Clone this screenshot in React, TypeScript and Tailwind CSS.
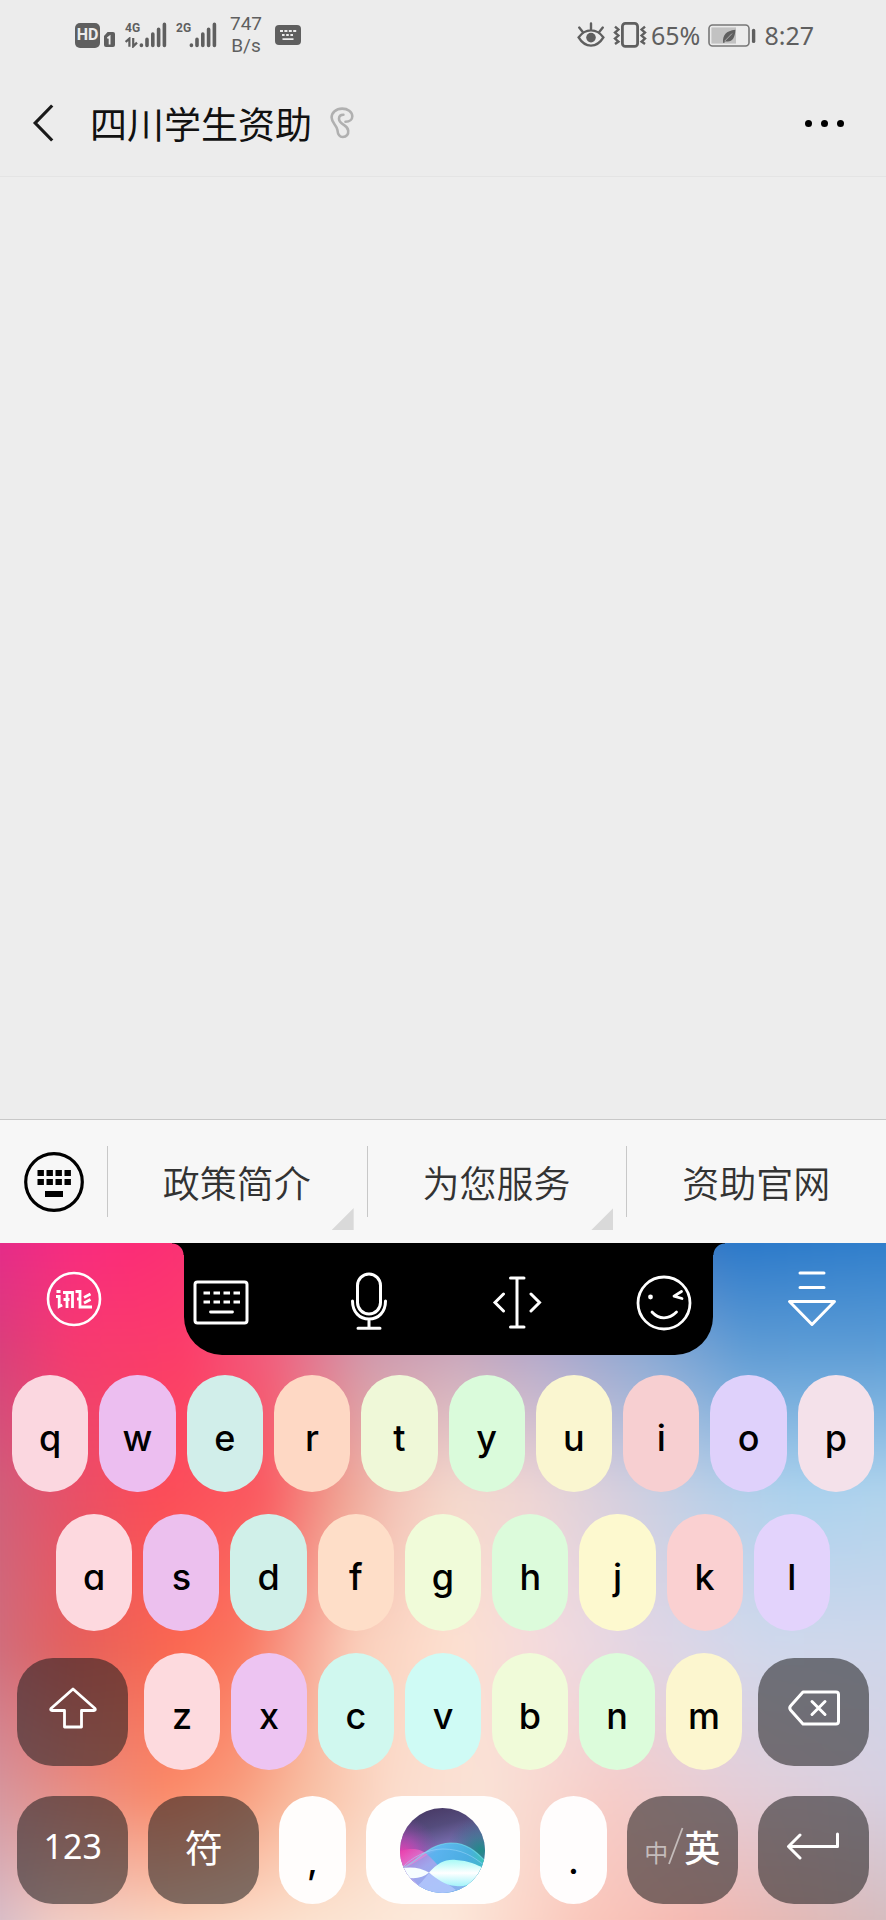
import React from "react";

const CJK = "font-['Noto_Sans_CJK_SC',sans-serif]";

/* ---------- status bar ---------- */

function SignalBars() {
  return (
    <svg width="28" height="26" viewBox="0 0 28 26" stroke="#5f5f5f" strokeWidth="3.6" strokeLinecap="round" aria-hidden="true">
      <path d="M2.4 23.4V23M8 23.4v-6M13.8 23.4v-11.4M19.6 23.4V7.2M25.4 23.4V2.4" />
    </svg>
  );
}

function StatusBar() {
  return (
    <div className="flex h-[72px] items-center justify-between pb-[2px] pl-[75px] pr-[72px] text-[#5f5f5f]">
      <div className="flex items-center">
        <span className="flex size-[25px] items-center justify-center rounded-[5px] bg-[#5f5f5f] font-['Roboto',sans-serif] text-[16px] font-bold leading-none text-[#ececec]">
          HD
        </span>
        <svg className="ml-1 mt-2" width="11" height="15" viewBox="0 0 11 15" aria-hidden="true">
          <path d="M3.6 0H9a2 2 0 0 1 2 2v11a2 2 0 0 1-2 2H2a2 2 0 0 1-2-2V4z" fill="#5f5f5f" />
          <path d="M3.4 6.2L5.6 4.6V12.4" fill="none" stroke="#ececec" strokeWidth="1.8" />
        </svg>
        <div className="ml-[10px] flex h-[26px] items-end">
          <div className="flex h-[26px] w-[14px] flex-col justify-between">
            <span className="font-['Roboto',sans-serif] text-[12px] font-bold leading-[12px]">4G</span>
            <svg width="13" height="11" viewBox="0 0 13 11" fill="none" stroke="#5f5f5f" strokeWidth="2.2" aria-hidden="true">
              <path d="M0.6 5L4.4 1.6V9.8M8.2 1V9.4L12 5.6" />
            </svg>
          </div>
          <SignalBars />
        </div>
        <div className="ml-[9px] flex h-[26px] items-start">
          <span className="w-[13px] font-['Roboto',sans-serif] text-[12px] font-bold leading-[12px]">2G</span>
          <SignalBars />
        </div>
        <div className="ml-[13px] text-center font-['Roboto',sans-serif] text-[19px] leading-[22px]">
          <div>747</div>
          <div>B/s</div>
        </div>
        <svg className="ml-[13px]" width="26" height="20" viewBox="0 0 26 20" aria-hidden="true">
          <rect width="26" height="20" rx="4" fill="#5f5f5f" />
          <path d="M5 6h3M9.4 6h3M13.8 6h3M18.2 6h3M7 10h2.6M11.2 10h2.6M15.4 10h2.6M7.5 14.2h11" stroke="#ececec" strokeWidth="1.8" />
        </svg>
      </div>
      <div className="flex items-center font-['Noto_Sans',sans-serif] text-[25px] leading-none">
        <svg width="28" height="26" viewBox="0 0 28 26" fill="none" stroke="#5f5f5f" strokeWidth="2.4" strokeLinecap="round" aria-hidden="true">
          <path d="M1.6 15.4C5 10.6 9 8.4 14 8.4s9 2.2 12.4 7C23 21 19 23.6 14 23.6S5 21 1.6 15.4zM14 7V1.4M5.4 9.6L2.2 5.6M22.6 9.6l3.2-4" />
          <circle cx="14" cy="15.6" r="4.8" fill="#5f5f5f" stroke="none" />
        </svg>
        <svg className="ml-2" width="34" height="26" viewBox="0 0 34 26" fill="none" stroke="#5f5f5f" aria-hidden="true">
          <rect x="9.4" y="1.4" width="15.2" height="23" rx="3" strokeWidth="2.8" />
          <path d="M2 4.6l3.4 3L2 10.6l3.4 3L2 16.6l3.4 3L2 22M32 4.6l-3.4 3 3.4 3-3.4 3 3.4 3-3.4 3L32 22" strokeWidth="2.4" />
        </svg>
        <span className="ml-1">65%</span>
        <svg className="ml-2" width="48" height="23" viewBox="0 0 48 23" aria-hidden="true">
          <rect x="1" y="1" width="40" height="21" rx="3.5" fill="none" stroke="#777" strokeWidth="1.6" />
          <rect x="3.4" y="3.4" width="24.6" height="16.2" fill="#c2c2c2" />
          <path d="M15 18.4c-.2-7 2.8-11.6 12.4-12.6-.4 8.6-3.6 12.800-9.8 11.400l-1.600 1.800z" fill="#5f5f5f" />
          <path d="M16.4 17.4L24 9.6" stroke="#c2c2c2" strokeWidth=".8" />
          <path d="M45.6 6.4v11" stroke="#5f5f5f" strokeWidth="3.4" strokeLinecap="round" />
        </svg>
        <span className="ml-2">8:27</span>
      </div>
    </div>
  );
}

/* ---------- conversation header ---------- */

function Header() {
  return (
    <header className="flex h-[105px] items-center border-b border-[#e4e4e4] pb-[2px] pl-[32px] pr-[42px]">
      <button type="button" aria-label="返回" className="flex h-12 w-[58px] items-center">
        <svg width="22" height="38" viewBox="0 0 22 38" fill="none" stroke="#1a1a1a" strokeWidth="3.2">
          <path d="M20.2 1.5L3.2 19l17 17.5" />
        </svg>
      </button>
      <h1 className={`${CJK} text-[37px] font-normal leading-[48px] text-[#111]`}>四川学生资助</h1>
      <svg className="ml-[18px]" width="24" height="32" viewBox="0 0 24 32" fill="none" stroke="#b0b0b0" strokeWidth="2.6" strokeLinecap="round" strokeLinejoin="round" aria-hidden="true">
        <path d="M15.5 14.8C20 14.8 22.3 12 22.3 9.2 22 4.6 17.8 1.6 12.2 1.6 6 1.6 1.6 5.6 1.6 10.6c0 5.2 5.2 7.4 5.8 12.4.4 4.2 1.6 7 5.4 7s5.8-2.8 5.4-6.4c-.3-2.8-1.8-4.2-4.4-5.8-3.4-2-4.8-3.8-4.8-6 0-2.4 1.8-4 4.4-4" />
      </svg>
      <button type="button" aria-label="更多" className="ml-auto flex h-12 items-center gap-[9px]">
        <span className="size-[7px] rounded-full bg-black" />
        <span className="size-[7px] rounded-full bg-black" />
        <span className="size-[7px] rounded-full bg-black" />
      </button>
    </header>
  );
}

/* ---------- account menu ---------- */

function MenuItem({ label, more }: { label: string; more?: boolean }) {
  return (
    <button type="button" className="relative flex h-full flex-1 items-center justify-center">
      <span className="absolute left-0 top-[26px] h-[71px] w-px bg-[#c8c8c8]" />
      <span className={`${CJK} text-[37px] font-[350] leading-[48px] text-[#333]`}>{label}</span>
      {more && (
        <span className="absolute bottom-[13px] right-[13px] size-[22px] bg-[#d9d9d9] [clip-path:polygon(100%_0,100%_100%,0_100%)]" />
      )}
    </button>
  );
}

function MenuBar() {
  return (
    <nav className="flex h-[124px] items-center border-t border-[#c8c8c8] bg-[#f7f7f7]">
      <button type="button" aria-label="切换键盘" className="flex h-full w-[107px] items-center justify-center">
        <svg width="60" height="60" viewBox="0 0 60 60">
          <circle cx="30" cy="30" r="28.3" fill="none" stroke="#000" strokeWidth="3.200" />
          <path d="M13.5 21h6.400m2.600 0h6.400m2.600 0h6.400m2.600 0h6.400M13.5 30h6.400m2.600 0h6.400m2.600 0h6.400m2.600 0h6.400" stroke="#000" strokeWidth="6.200" />
          <path d="M21 42h18" stroke="#000" strokeWidth="6" />
        </svg>
      </button>
      <MenuItem label="政策简介" more />
      <MenuItem label="为您服务" more />
      <MenuItem label="资助官网" />
    </nav>
  );
}

/* ---------- keyboard ---------- */

/* Colour mesh behind the keys: each row is a horizontal gradient which fades in below the previous one. */
const MESH: { y: number; stops: string }[] = [
  { y: 2, stops: "#e0288f 0%, #f82a82 11%, #fd2a78 18%, #f2406f 34%, #90608f 56%, #2474c8 80%, #2c7ccb 100%" },
  { y: 18, stops: "#cf4080 0%, #f63a70 11%, #fc3c6a 23%, #f06080 32%, #cf98ac 42%, #c8a6bc 52%, #b0a8cc 61%, #88a8d4 72%, #5c9ad4 82%, #5a9cd6 100%" },
  { y: 38, stops: "#c86480 0%, #e85068 11%, #fc4c58 20%, #fa5a60 31%, #f0a090 39%, #f3c4b8 45%, #f5d9cc 51%, #efd6d4 59%, #d8d0de 68%, #b8d0e9 79%, #acd3ee 88%, #b2d4ed 100%" },
  { y: 59, stops: "#c87288 0%, #e5605c 11%, #fb6850 22%, #fa7860 29%, #f79c8a 34%, #fad0bc 41%, #fde0d0 51%, #f3dade 61%, #e2d6e4 71%, #d0d8ec 84%, #cfd6ea 100%" },
  { y: 79, stops: "#d09aa8 0%, #e88e84 11%, #fb8a68 21%, #f99c7c 28%, #f9c0a4 36%, #fbdccc 45%, #fae2d6 54%, #f6ccc8 68%, #e6cdd6 80%, #d4d0e2 100%" },
  { y: 97, stops: "#ccb8cc 0%, #f0cfc8 9%, #fad8c4 22%, #fbe4d2 36%, #fceadc 50%, #fac8bc 64%, #f6b8b0 76%, #e2b8b4 88%, #d0bcc0 100%" },
];

function Backdrop() {
  return (
    <div className="absolute inset-0 overflow-hidden" aria-hidden="true">
      <div className="absolute -inset-8 blur-[14px]">
        {MESH.map((row, i) => {
          const mask = i === 0 ? undefined : `linear-gradient(to bottom, transparent ${MESH[i - 1].y}%, #000 ${row.y}%)`;
          return (
            <div
              key={row.y}
              className="absolute inset-0"
              style={{ backgroundImage: `linear-gradient(to right, ${row.stops})`, maskImage: mask, WebkitMaskImage: mask }}
            />
          );
        })}
      </div>
    </div>
  );
}

function Tool({ label, children }: { label: string; children: React.ReactNode }) {
  return (
    <button type="button" aria-label={label} className="flex h-full items-center justify-center">
      {children}
    </button>
  );
}

function Toolbar() {
  return (
    <div className="relative h-[112px]">
      <div className="absolute bottom-0 left-[184px] right-[173px] top-0 rounded-b-[38px] bg-black">
        <span className="absolute right-full top-0 size-3 bg-[radial-gradient(circle_at_0_100%,transparent_11px,#000_12px)]" />
        <span className="absolute left-full top-0 size-3 bg-[radial-gradient(circle_at_100%_100%,transparent_11px,#000_12px)]" />
      </div>
      <div className="relative grid h-full grid-cols-6">
        <Tool label="讯飞输入法">
          <svg width="56" height="56" viewBox="0 0 56 56" fill="none" stroke="#fff" strokeWidth="2.6">
            <circle cx="28" cy="28" r="26" />
            <path d="M10.500 20.500h4M10 25.500h3.200V35.500l3-1.500M17 21.500h9.500V37M21 21.500V37M17.500 28.500h6M29.500 20.500h4.500v15.500h12M31 28h3M38 26.500l6.500-3.500M38 32l6.500-3.500" strokeWidth="2.8" />
          </svg>
        </Tool>
        <Tool label="键盘">
          <svg className="mt-2" width="56" height="46" viewBox="0 0 56 46" fill="none" stroke="#fff" strokeWidth="3">
            <rect x="2" y="2" width="52" height="41" rx="2.5" />
            <path d="M10.5 13h6.5M20.5 13H27M30.5 13H37M40.5 13H47M10.5 22h6.5M20.5 22H27M30.5 22H37M40.5 22H47" />
            <path d="M17.5 32h22" strokeWidth="2.8" strokeLinecap="round" />
          </svg>
        </Tool>
        <Tool label="语音">
          <svg className="mt-1" width="38" height="58" viewBox="0 0 38 58" fill="none" stroke="#fff" strokeWidth="3" strokeLinecap="round">
            <rect x="7.5" y="2" width="23" height="40" rx="11.5" />
            <path d="M2.5 29c0 11 7 18 16.500 18s16.500-7 16.500-18M19 47v9M8 56.2h22" />
          </svg>
        </Tool>
        <Tool label="光标">
          <svg className="mt-2" width="52" height="54" viewBox="0 0 52 54" fill="none" stroke="#fff" strokeWidth="3" strokeLinecap="round">
            <path d="M26 2v49M19.5 2h13.5M19.5 51h13.5M12.5 18L4 26.5 12.5 35M40 18l8.500 8.500L40 35" />
          </svg>
        </Tool>
        <Tool label="表情">
          <svg className="mt-2" width="56" height="56" viewBox="0 0 56 56" fill="none" stroke="#fff" strokeWidth="2.8" strokeLinecap="round" strokeLinejoin="round">
            <circle cx="28" cy="28" r="26" />
            <path d="M16 37c3.500 4 7.500 5.800 12 5.800S36.500 41 40.500 37M45.500 16.500l-7.500 4.600 8 2.400" />
            <circle cx="14.5" cy="22" r="2.4" fill="#fff" stroke="none" />
          </svg>
        </Tool>
        <Tool label="收起键盘">
          <svg width="50" height="56" viewBox="0 0 50 56" fill="none" stroke="#fff" strokeWidth="3" strokeLinecap="round" strokeLinejoin="round">
            <path d="M13 2h24M13 16.5h24M2.500 30.500h45L25 53.500z" />
          </svg>
        </Tool>
      </div>
    </div>
  );
}

const LETTER = "font-['Inter',sans-serif] text-[36px] font-medium leading-none text-black [font-feature-settings:'cv11']";

function Key({ char, tone }: { char: string; tone: string }) {
  return (
    <button type="button" className={`flex h-[117px] min-w-0 items-center justify-center rounded-[38px] pt-2 ${LETTER} ${tone}`}>
      {char}
    </button>
  );
}

function DarkKey({ label, className, children }: { label: string; className?: string; children: React.ReactNode }) {
  return (
    <button
      type="button"
      aria-label={label}
      className={`flex h-[108px] items-center justify-center rounded-[36px] bg-[#1c1c1c]/55 pb-2 text-white ${className ?? ""}`}
    >
      {children}
    </button>
  );
}

const ROW1: [string, string][] = [
  ["q", "bg-[#fbd7e0]"], ["w", "bg-[#ecbef0]"], ["e", "bg-[#d1eeea]"], ["r", "bg-[#fed8c4]"], ["t", "bg-[#eff8d8]"],
  ["y", "bg-[#dafbdb]"], ["u", "bg-[#faf6d0]"], ["i", "bg-[#f7cfd1]"], ["o", "bg-[#dfd1fb]"], ["p", "bg-[#f4e1ea]"],
];
const ROW2: [string, string][] = [
  ["a", "bg-[#fdd9df]"], ["s", "bg-[#ecc0ee]"], ["d", "bg-[#d0f0e9]"], ["f", "bg-[#fedec8]"], ["g", "bg-[#f0fbd9]"],
  ["h", "bg-[#dcfbdb]"], ["j", "bg-[#fdf9cf]"], ["k", "bg-[#fad0d1]"], ["l", "bg-[#e3d3fc]"],
];
const ROW3: [string, string][] = [
  ["z", "bg-[#fddade]"], ["x", "bg-[#edc4f2]"], ["c", "bg-[#d0f8ef]"], ["v", "bg-[#cffbf5]"], ["b", "bg-[#f0fbd9]"],
  ["n", "bg-[#dcfcdb]"], ["m", "bg-[#fcf6cf]"],
];

function Orb() {
  return (
    <svg width="85" height="85" viewBox="0 0 85 85" aria-hidden="true">
      <defs>
        <clipPath id="orb-clip"><circle cx="42.5" cy="42.5" r="42.5" /></clipPath>
        <linearGradient id="orb-sky" x1="0" y1="0" x2="0.25" y2="1">
          <stop offset="0" stopColor="#45345f" />
          <stop offset="0.3" stopColor="#544c7c" />
          <stop offset="0.55" stopColor="#7c70b4" />
          <stop offset="1" stopColor="#58a8e8" />
        </linearGradient>
        <radialGradient id="orb-pink" cx="0.02" cy="0.55" r="0.45">
          <stop offset="0" stopColor="#ee3cb0" />
          <stop offset="0.45" stopColor="#b848b4" stopOpacity="0.7" />
          <stop offset="1" stopColor="#8048a0" stopOpacity="0" />
        </radialGradient>
        <radialGradient id="orb-green" cx="0.95" cy="0.5" r="0.4">
          <stop offset="0" stopColor="#208c88" />
          <stop offset="1" stopColor="#306080" stopOpacity="0" />
        </radialGradient>
        <linearGradient id="orb-blue" x1="0" y1="0" x2="1" y2="0.3">
          <stop offset="0" stopColor="#b49cf0" />
          <stop offset="0.45" stopColor="#60b8f0" />
          <stop offset="0.8" stopColor="#48b0dc" />
          <stop offset="1" stopColor="#3cc4b8" />
        </linearGradient>
        <linearGradient id="orb-lilac" x1="0" y1="0" x2="1" y2="1">
          <stop offset="0" stopColor="#ec3aa8" />
          <stop offset="0.35" stopColor="#e4a0ec" />
          <stop offset="1" stopColor="#a8c4fa" />
        </linearGradient>
        <linearGradient id="orb-white" x1="0" y1="0" x2="0" y2="1">
          <stop offset="0" stopColor="#a8faf6" />
          <stop offset="0.5" stopColor="#fff" />
          <stop offset="1" stopColor="#a4f4fa" />
        </linearGradient>
      </defs>
      <g clipPath="url(#orb-clip)">
        <rect width="85" height="85" fill="url(#orb-sky)" />
        <rect width="85" height="85" fill="url(#orb-pink)" />
        <rect width="85" height="85" fill="url(#orb-green)" />
        <path d="M0 61C16 56 27 36 50 35c16-.5 26 8 36 19v32H0z" fill="url(#orb-blue)" />
        <path d="M0 43c14-4 22-2 30 6 12 12 24 27 44 33l-30 8H0z" fill="url(#orb-lilac)" opacity="0.8" />
        <path d="M0 61c16-3 28-20 46-19 14 0 26 5 40 15v30H30C20 78 10 69 0 61z" fill="#50a8ec" opacity="0.35" />
        <path d="M0 61C16 56 27 36 50 35c16-.5 26 8 36 19" fill="none" stroke="#74e8f0" strokeWidth="1.2" opacity="0.6" />
        <path d="M3 59c8-9 24-18 40-18 18 0 30 7 42 17" fill="none" stroke="#a4dcff" strokeWidth="1" opacity="0.5" />
        <path d="M14 80c6-3 10-9 15-15 6 2 18 10 27 17L43 86z" fill="#b8ccff" opacity="0.7" />
        <path d="M0 61c10-3 21-1 29 3.500C22 71 10 72 0 67z" fill="#f6fdff" />
        <path d="M29 64.500C38 55 45 51 56 52c13 .8 21 5 30 9v8c-8 7-20 10-30 9-12-1-19-7-27-13.500z" fill="url(#orb-white)" />
      </g>
    </svg>
  );
}

function Keyboard() {
  return (
    <section aria-label="键盘" className="relative">
      <Backdrop />
      <div className="relative">
        <Toolbar />
        <div className="flex flex-col gap-[22px] pt-5">
          <div className="grid grid-cols-10 gap-[11px] px-3">
            {ROW1.map(([c, tone]) => <Key key={c} char={c} tone={tone} />)}
          </div>
          <div className="grid grid-cols-9 gap-[11px] px-[56px]">
            {ROW2.map(([c, tone]) => <Key key={c} char={c} tone={tone} />)}
          </div>
          <div className="flex items-center gap-4 px-[17px]">
            <DarkKey label="大写" className="w-[111px]">
              <svg width="50" height="44" viewBox="0 0 50 44" fill="none" stroke="#fff" strokeWidth="2.8" strokeLinejoin="round">
                <path d="M25 3L3 22.5c-.8 1.300 0 2 1 2h12.500V41h17V24.500H46c1 0 1.800-.7 1-2z" />
              </svg>
            </DarkKey>
            <div className="grid flex-1 grid-cols-7 gap-[11px]">
              {ROW3.map(([c, tone]) => <Key key={c} char={c} tone={tone} />)}
            </div>
            <DarkKey label="删除" className="w-[111px]">
              <svg width="54" height="38" viewBox="0 0 54 38" fill="none" stroke="#fff" strokeWidth="3" strokeLinecap="round" strokeLinejoin="round">
                <path d="M16 3h33c1.500 0 2.500 1 2.500 2.500v27c0 1.500-1 2.500-2.500 2.500H16L3.500 21c-1-1.300-1-2.700 0-4zM25 12.500l13 13M38 12.500l-13 13" />
              </svg>
            </DarkKey>
          </div>
        </div>
        <div className="mt-[26px] grid grid-cols-[111fr_110fr_67fr_153fr_67fr_110fr_111fr] gap-5 px-[17px] pb-4">
          <DarkKey label="数字">
            <span className="font-['Noto_Sans',sans-serif] text-[34px] leading-none">123</span>
          </DarkKey>
          <DarkKey label="符号">
            <span className={`${CJK} text-[38px] leading-none`}>符</span>
          </DarkKey>
          <button type="button" className={`flex h-[108px] items-center justify-center rounded-[34px] bg-[#fffdfc] pt-[22px] ${LETTER}`}>,</button>
          <button type="button" aria-label="空格" className="flex h-[108px] items-center justify-center rounded-[36px] bg-[#fffefd]">
            <Orb />
          </button>
          <button type="button" className={`flex h-[108px] items-center justify-center rounded-[34px] bg-[#fffdfd] pt-[22px] ${LETTER}`}>.</button>
          <DarkKey label="中英切换">
            <span className={`${CJK} flex items-end leading-none`}>
              <span className="text-[24px] leading-[26px] text-[#c4bcbb]">中</span>
              <svg width="16" height="38" viewBox="0 0 16 38" fill="none" stroke="#c4bcbb" strokeWidth="1.8" aria-hidden="true">
                <path d="M14.5 1L1 37" />
              </svg>
              <span className="text-[36px] font-medium leading-[38px]">英</span>
            </span>
          </DarkKey>
          <DarkKey label="换行">
            <svg width="54" height="28" viewBox="0 0 54 28" fill="none" stroke="#fff" strokeWidth="3" strokeLinecap="round" strokeLinejoin="round">
              <path d="M51.5 2v12.500H3M14 3L2.500 14.500 14 26" />
            </svg>
          </DarkKey>
        </div>
      </div>
    </section>
  );
}

export default function App() {
  return (
    <div className="flex min-h-screen flex-col bg-[#ececec]">
      <StatusBar />
      <Header />
      <main className="flex-1 bg-[#ededed]" />
      <MenuBar />
      <Keyboard />
    </div>
  );
}
